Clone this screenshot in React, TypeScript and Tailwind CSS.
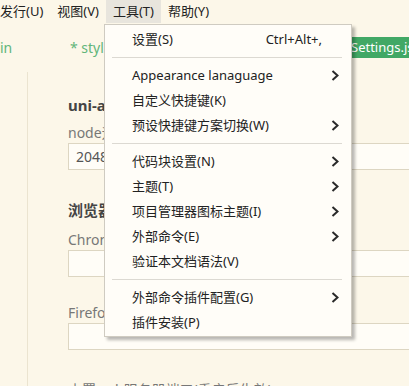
import * as React from 'react'

const FONT = "font-['Noto_Sans','Noto_Sans_CJK_SC',sans-serif]"

type Item = { label: string; shortcut?: string; sub?: boolean } | 'sep'

const ITEMS: Item[] = [
  { label: '设置(S)', shortcut: 'Ctrl+Alt+,' },
  'sep',
  { label: 'Appearance lanaguage', sub: true },
  { label: '自定义快捷键(K)' },
  { label: '预设快捷键方案切换(W)', sub: true },
  'sep',
  { label: '代码块设置(N)', sub: true },
  { label: '主题(T)', sub: true },
  { label: '项目管理器图标主题(I)', sub: true },
  { label: '外部命令(E)', sub: true },
  { label: '验证本文档语法(V)' },
  'sep',
  { label: '外部命令插件配置(G)', sub: true },
  { label: '插件安装(P)' },
]

function Chevron() {
  return (
    <svg width="8" height="11" viewBox="0 0 8 11" className="text-[#2a2a2a]">
      <polyline points="1.5,1 6.5,5.5 1.5,10" fill="none" stroke="currentColor" strokeWidth="2" />
    </svg>
  )
}

function ToolsMenu() {
  return (
    <div className="absolute left-[104px] top-[24px] w-[248px] border border-[#cfcbc1] bg-[#fffdf8] pt-[2px] pb-[1px] shadow-[3px_3px_3px_rgba(0,0,0,0.28)]">
      {ITEMS.map((it, i) =>
        it === 'sep' ? (
          <div key={i} className="py-[5px] pl-[7px] pr-[9px]">
            <div className="h-px bg-[#dcd9d2]" />
          </div>
        ) : (
          <div key={i} className="flex h-[25px] items-center pl-[27px] pr-[12px] text-[13px] text-[#222]">
            <span className="flex-1">{it.label}</span>
            {it.shortcut && <span className="mr-[17px]">{it.shortcut}</span>}
            {it.sub && <Chevron />}
          </div>
        )
      )}
    </div>
  )
}

function Field({ label, value, className }: { label: string; value?: string; className?: string }) {
  return (
    <div className={className}>
      <div className="h-[18px] text-[14px] leading-[18px] text-[#777]">{label}</div>
      <div className="mt-[1px] flex h-[27px] w-[400px] items-center border border-[#ddd6c2] bg-[#fffdf7] pl-[7px] text-[14px] text-[#555]">
        {value}
      </div>
    </div>
  )
}

export default function App() {
  return (
    <div className={`relative h-[386px] w-[409px] overflow-hidden bg-[#fcf7e9] ${FONT}`}>
      {/* 菜单栏 */}
      <div className="flex h-[23px] items-center text-[13px] text-[#222]">
        <div className="-ml-[7px] flex h-full items-center px-[7px]">发行(U)</div>
        <div className="flex h-full items-center px-[7px]">视图(V)</div>
        <div className="flex h-full items-center bg-[#e8e5dd] px-[7px]">工具(T)</div>
        <div className="flex h-full items-center px-[7px]">帮助(Y)</div>
      </div>

      {/* 标签栏 */}
      <div className="flex h-[49px] items-center whitespace-nowrap text-[14px] text-[#62b57a]">
        <span className="w-[70px] shrink-0">in</span>
        <span className="w-[262px] shrink-0">* style.css</span>
        <span className="flex h-[21px] shrink-0 items-center bg-[#41a865] pl-[19px] pr-[10px] text-[13px] text-white">Settings.json</span>
      </div>

      {/* 设置内容 */}
      <div className="flex h-full">
        <div className="w-[28px] shrink-0 border-r border-[#ebe4d0]" />
        <div className="pl-[40px] pt-[23px] whitespace-nowrap">
          <div className="h-[20px] text-[15px] font-bold leading-[20px] text-[#444]">uni-app运行配置</div>
          <Field className="mt-[9px]" label="node运行内存(MB)" value="2048" />
          <div className="mt-[30px] h-[20px] text-[15px] font-bold leading-[20px] text-[#444]">浏览器运行配置</div>
          <Field className="mt-[11px]" label="Chrome浏览器安装路径" />
          <Field className="mt-[27px]" label="Firefox浏览器安装路径" />
          <div className="mt-[31px] h-[18px] text-[14px] leading-[18px] text-[#777]">内置web服务器端口(重启后生效)</div>
        </div>
      </div>

      <ToolsMenu />
    </div>
  )
}
